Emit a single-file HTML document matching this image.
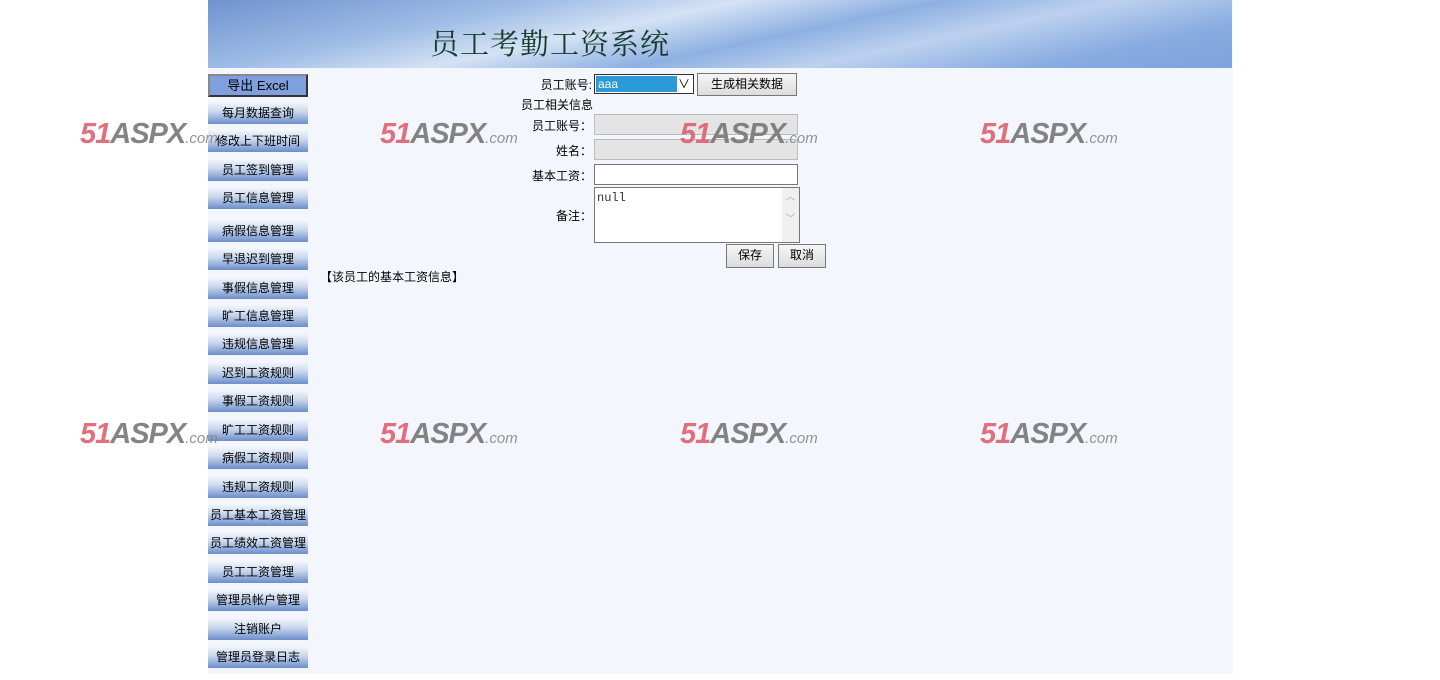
<!DOCTYPE html>
<html><head><meta charset="utf-8"><style>
body{margin:0;background:#fff;width:1440px;height:680px;overflow:hidden;position:relative;font-family:"Liberation Sans","Noto Sans CJK SC",sans-serif;font-size:12px;color:#000}
#wrap{position:absolute;left:208px;top:0;width:1025px;height:674px;background:#f3f7fd}
#hdr{position:absolute;left:0;top:0;width:1024px;height:68px;background:linear-gradient(168deg,#6f93cf 0%,#9fbce6 25%,#d4e2f5 40%,#8eb0e2 55%,#bcd1ef 68%,#88abe0 85%,#7ea3db 100%);overflow:hidden}
#hdr .t{position:absolute;left:222px;top:22px;font-family:"Noto Serif CJK SC",serif;font-size:29px;color:#153a2a;letter-spacing:1px}
.b{position:absolute;left:0;width:100px;height:22px;background:linear-gradient(#f4f7fc,#c8d6ee 45%,#6b8dc9);text-align:center;line-height:22px;font-size:12px}
.ex{position:absolute;left:0;top:74px;width:96px;height:19px;border:2px solid #555;border-color:#888 #333 #333 #888;background:#7f9fdf;text-align:center;line-height:19px;font-size:13px}
.wm{position:absolute;z-index:5;font-weight:bold;font-style:italic;font-size:29px;letter-spacing:-1px;white-space:nowrap;opacity:.9}
.wm .r{color:#e06070}.wm .g{color:#777}.wm .c{font-size:15px;font-weight:normal;color:#888;letter-spacing:0}
.l{position:absolute;text-align:right;font-size:12px}
.in{position:absolute;box-sizing:border-box;border:1px solid #999;background:#fff}
.btn{position:absolute;box-sizing:border-box;border:1px solid #777;background:linear-gradient(#f6f6f6,#dcdcdc);text-align:center;font-size:12px;line-height:21px}
</style></head><body>
<div id="wrap">
<div id="hdr"><div class="t">员工考勤工资系统</div></div>
<div class="ex">导出 Excel</div>
<div class="b" style="top:102px">每月数据查询</div>
<div class="b" style="top:130px">修改上下班时间</div>
<div class="b" style="top:159px">员工签到管理</div>
<div class="b" style="top:187px">员工信息管理</div>
<div class="b" style="top:220px">病假信息管理</div>
<div class="b" style="top:248px">早退迟到管理</div>
<div class="b" style="top:277px">事假信息管理</div>
<div class="b" style="top:305px">旷工信息管理</div>
<div class="b" style="top:333px">违规信息管理</div>
<div class="b" style="top:362px">迟到工资规则</div>
<div class="b" style="top:390px">事假工资规则</div>
<div class="b" style="top:419px">旷工工资规则</div>
<div class="b" style="top:447px">病假工资规则</div>
<div class="b" style="top:476px">违规工资规则</div>
<div class="b" style="top:504px">员工基本工资管理</div>
<div class="b" style="top:532px">员工绩效工资管理</div>
<div class="b" style="top:561px">员工工资管理</div>
<div class="b" style="top:589px">管理员帐户管理</div>
<div class="b" style="top:618px">注销账户</div>
<div class="b" style="top:646px">管理员登录日志</div>
</div>
<div class="wm" style="left:80px;top:118px"><span class="r">51</span><span class="g">ASPX</span><span class="c">.com</span></div>
<div class="wm" style="left:380px;top:118px"><span class="r">51</span><span class="g">ASPX</span><span class="c">.com</span></div>
<div class="wm" style="left:680px;top:118px"><span class="r">51</span><span class="g">ASPX</span><span class="c">.com</span></div>
<div class="wm" style="left:980px;top:118px"><span class="r">51</span><span class="g">ASPX</span><span class="c">.com</span></div>
<div class="wm" style="left:80px;top:418px"><span class="r">51</span><span class="g">ASPX</span><span class="c">.com</span></div>
<div class="wm" style="left:380px;top:418px"><span class="r">51</span><span class="g">ASPX</span><span class="c">.com</span></div>
<div class="wm" style="left:680px;top:418px"><span class="r">51</span><span class="g">ASPX</span><span class="c">.com</span></div>
<div class="wm" style="left:980px;top:418px"><span class="r">51</span><span class="g">ASPX</span><span class="c">.com</span></div>

<div class="l" style="left:500px;width:92px;top:76px">员工账号:</div>
<div class="in" style="left:594px;top:74px;width:100px;height:20px;border-color:#333"><div style="position:absolute;left:1px;top:1px;width:79px;height:16px;background:#2a9ad8;color:#fff;line-height:16px;padding-left:2px;font-size:12px">aaa</div><div style="position:absolute;right:3px;top:0;font-size:12px;line-height:18px">&#8744;</div></div>
<div class="btn" style="left:697px;top:73px;width:100px;height:23px">生成相关数据</div>
<div class="l" style="left:500px;width:93px;top:96px">员工相关信息</div>
<div class="l" style="left:500px;width:92px;top:117px">员工账号：</div>
<div class="in" style="left:594px;top:114px;width:204px;height:21px;background:#e4e4e4;border-color:#bbb"></div>
<div class="l" style="left:500px;width:92px;top:142px">姓名：</div>
<div class="in" style="left:594px;top:139px;width:204px;height:21px;background:#e4e4e4;border-color:#bbb"></div>
<div class="l" style="left:500px;width:92px;top:167px">基本工资：</div>
<div class="in" style="left:594px;top:164px;width:204px;height:21px;border-color:#777"></div>
<div class="l" style="left:500px;width:92px;top:207px">备注：</div>
<div class="in" style="left:594px;top:187px;width:206px;height:56px;border-color:#777;font-family:'Liberation Mono',monospace;font-size:12px;padding:3px 2px;color:#333">null<div style="position:absolute;right:0;top:0;width:17px;height:54px;background:#f0f0f0;color:#aaa;font-size:10px;text-align:center;line-height:22px">︿<br>﹀</div></div>
<div class="btn" style="left:726px;top:244px;width:48px;height:24px">保存</div>
<div class="btn" style="left:778px;top:244px;width:48px;height:24px">取消</div>
<div style="position:absolute;left:320px;top:268px;font-size:12px">【该员工的基本工资信息】</div>
</body></html>
